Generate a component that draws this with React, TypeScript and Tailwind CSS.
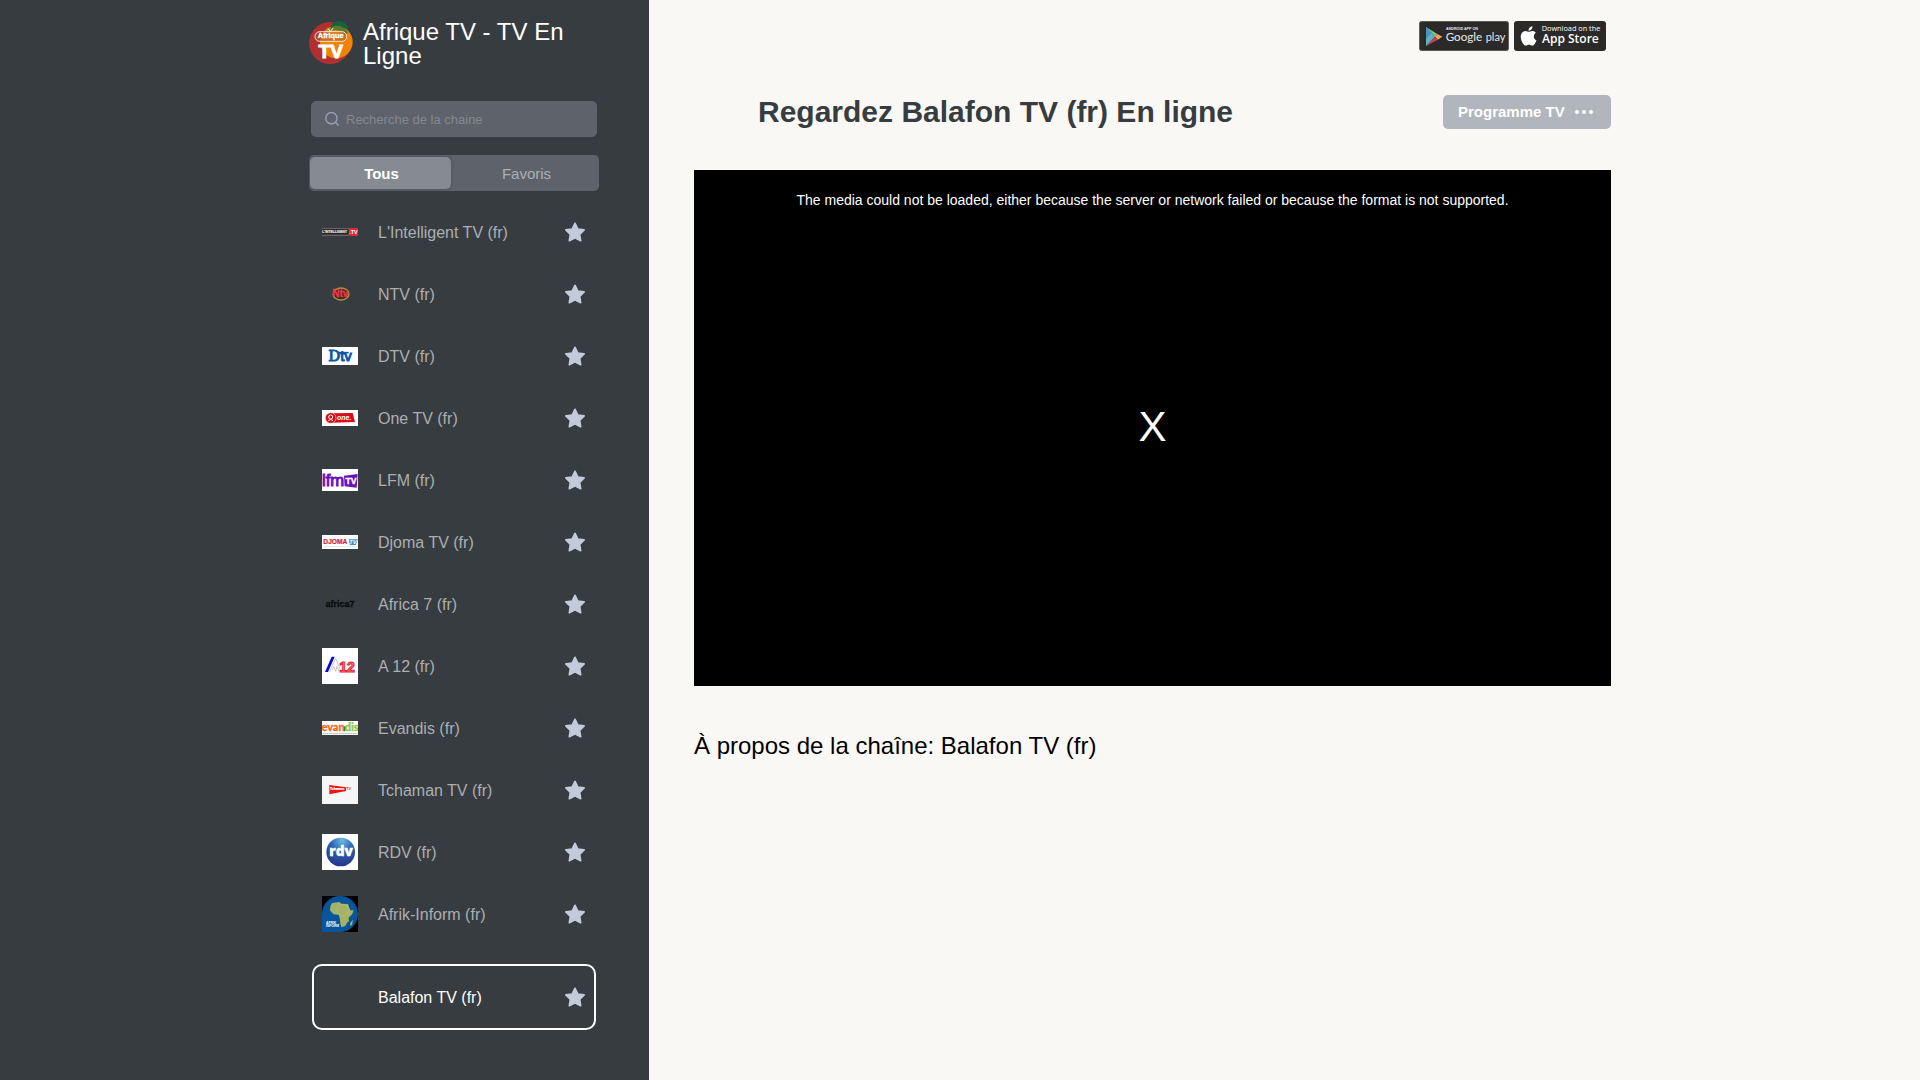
import type { ReactNode } from "react";

const SANS = "'Open Sans', sans-serif";
const ARIAL = "'Liberation Sans', Arial, sans-serif";

function AfriqueLogo() {
  return (
    <svg viewBox="1 0 132 132" className="h-11 w-11 shrink-0" role="img" aria-label="Afrique TV">
      <defs>
        <clipPath id="disc">
          <circle cx="64" cy="69" r="63" />
        </clipPath>
      </defs>
      <circle cx="64" cy="69" r="63" fill="#ae3130" />
      <circle cx="91" cy="31" r="28" fill="#176540" />
      <circle cx="83" cy="66" r="49" fill="#f0830a" />
      <g clipPath="url(#disc)">
        <path d="M64 26 A28 28 0 0 1 119 36 Q92 8 64 26 Z" fill="#176540" />
        <path d="M64 26 Q92 8 119 36 L112 46 Q88 22 63 34 Z" fill="#5f7a2c" />
      </g>
      <rect x="19" y="35" width="95" height="29" rx="14" fill="#a9552c" fillOpacity="0.5" stroke="#fff" strokeWidth="2.5" />
      <path d="M58 26 L65 34 L74 24" fill="none" stroke="#fff" strokeWidth="3" />
      <text x="66" y="55" textAnchor="middle" fontSize="22" fontWeight="700" fill="#fff" stroke="#fff" fontFamily={ARIAL}>Afrique</text>
      <text x="66" y="114" textAnchor="middle" fontSize="57" fontWeight="700" fill="#fff" stroke="#fff" strokeWidth="3" fontFamily={ARIAL}>TV</text>
    </svg>
  );
}

function LogoIntelligent() {
  return (
    <svg viewBox="0 0 108 24" className="w-9">
      <rect width="108" height="24" fill="#6b6664" />
      <rect y="3" width="80" height="17" fill="#2c2827" />
      <text x="1" y="16" fontSize="10" fontWeight="700" fill="#e6e2dd" stroke="#e6e2dd" strokeWidth="0.5" fontFamily={ARIAL}>L'INTELLIGENT</text>
      <rect x="81" width="27" height="24" fill="#e0283a" />
      <text x="82" y="18" fontSize="16" fontWeight="700" fill="#fff" fontFamily={ARIAL}>.TV</text>
    </svg>
  );
}

function LogoNtv() {
  return (
    <svg viewBox="0 0 108 42" className="w-9">
      <ellipse cx="57" cy="21" rx="24" ry="18" fill="#3a2d28" stroke="#b38f42" strokeWidth="4" />
      <text x="55" y="31" textAnchor="middle" fontSize="30" fontWeight="700" fill="#f03646" stroke="#f03646" strokeWidth="1" fontFamily={ARIAL}>Ntv</text>
    </svg>
  );
}

function LogoDtv() {
  return (
    <svg viewBox="0 0 108 54" className="w-9">
      <rect width="108" height="54" fill="#fff" />
      <text x="54" y="42" textAnchor="middle" fontSize="45" fontWeight="400" fill="#0c57a4" stroke="#0c57a4" strokeWidth="3" fontFamily={ARIAL}>
        <tspan fontFamily="'DejaVu Serif', serif">D</tspan>tv
      </text>
      <path d="M50 17 H80" stroke="#0c57a4" strokeWidth="5" />
    </svg>
  );
}

function LogoOne() {
  return (
    <svg viewBox="0 0 108 48" className="w-9">
      <rect width="108" height="48" fill="#fff" />
      <path d="M26 10 L92 9 L99 36 L28 38 Z" fill="#d80d19" />
      <circle cx="26" cy="24" r="16" fill="#d80d19" stroke="#fff" strokeWidth="1.5" />
      <circle cx="26" cy="21" r="6" fill="none" stroke="#fff" strokeWidth="3" />
      <path d="M19 32 Q26 24 33 32" fill="none" stroke="#fff" strokeWidth="3" />
      <text x="45" y="30" fontSize="21" fontWeight="700" fontStyle="italic" fill="#fff" fontFamily={ARIAL}>one.</text>
    </svg>
  );
}

function LogoLfm() {
  return (
    <svg viewBox="0 0 108 66" className="w-9">
      <rect width="108" height="66" fill="#fff" />
      <path d="M66 20 L107 15 L104 56 L68 52 Z" fill="#6c10b8" />
      <text x="0" y="51" fontSize="50" fill="#6c10b8" stroke="#6c10b8" strokeWidth="3" fontFamily={ARIAL}>lfm</text>
      <text x="87" y="45" textAnchor="middle" fontSize="26" fontWeight="700" fill="#fff" stroke="#fff" fontFamily={ARIAL}>TV</text>
    </svg>
  );
}

function LogoDjoma() {
  return (
    <svg viewBox="0 0 108 42" className="w-9">
      <rect width="108" height="42" fill="#fff" />
      <path d="M80 13 H108 L101 30 H84 Z" fill="#3a8fc6" />
      <text x="4" y="28" fontSize="20" fontWeight="700" fill="#d3202f" stroke="#d3202f" strokeWidth="0.5" fontFamily={ARIAL}>DJOMA</text>
      <text x="82" y="27" fontSize="17" fontWeight="700" fontStyle="italic" fill="#fff" fontFamily={ARIAL}>TV</text>
      <path d="M2 35 H106" stroke="#e3e8ed" strokeWidth="3" />
    </svg>
  );
}

function LogoAfrica() {
  return (
    <svg viewBox="0 0 108 36" className="w-9">
      <text x="54" y="27" textAnchor="middle" fontSize="27" fontWeight="700" fill="#0b0c0d" stroke="#0b0c0d" strokeWidth="1" fontFamily={ARIAL}>africa7</text>
    </svg>
  );
}

function LogoA12() {
  return (
    <svg viewBox="0 0 108 108" className="w-9">
      <rect width="108" height="108" fill="#fff" />
      <path d="M9 72 L29 26 H38 L18 72 Z" fill="#0909d4" />
      <path d="M23 72 L41 31 L58 72 M30 66 L36 56 L41 70 L45 56 L51 70" fill="none" stroke="#aaa" strokeWidth="2" />
      <text x="52" y="72" fontSize="42" fontWeight="700" fill="#ff8080" stroke="#e8202c" strokeWidth="3" fontFamily={ARIAL}>12</text>
    </svg>
  );
}

function LogoEvandis() {
  return (
    <svg viewBox="0 0 108 42" className="w-9">
      <rect width="108" height="42" fill="#fff" />
      <text x="54" y="31" textAnchor="middle" fontSize="33" fontWeight="700" fill="#f0631d" stroke="#f0631d" fontFamily="Lato, sans-serif">
        evan<tspan fill="#8bc63c" stroke="#8bc63c">dis</tspan>
      </text>
      <path d="M68 16 V31" stroke="#25825a" strokeWidth="4" />
      <path d="M1 38 H107" stroke="#b5b5b5" strokeWidth="3" strokeDasharray="5 1" />
    </svg>
  );
}

function LogoTchaman() {
  return (
    <svg viewBox="0 0 108 84" className="w-9">
      <rect width="108" height="84" fill="#f6f6f7" />
      <path d="M22 27 L72 34 V45 L22 55 Z" fill="#ee1219" />
      <text x="24" y="43" fontSize="10" fontWeight="700" fill="#fff" stroke="#fff" strokeWidth="0.5" fontFamily={ARIAL}>Tchaman</text>
      <text x="73" y="43" fontSize="11" fontWeight="700" fill="#ee1219" fontFamily={ARIAL}>TV</text>
    </svg>
  );
}

function LogoRdv() {
  return (
    <svg viewBox="0 0 108 108" className="w-9">
      <defs>
        <radialGradient id="globe" cx="0.55" cy="0.1" r="0.9">
          <stop offset="0" stopColor="#6db8e6" />
          <stop offset="0.45" stopColor="#2a62ad" />
          <stop offset="1" stopColor="#27348b" />
        </radialGradient>
      </defs>
      <rect width="108" height="108" fill="#fff" />
      <circle cx="56" cy="54" r="43" fill="url(#globe)" />
      <text x="57" y="67" textAnchor="middle" fontSize="41" fontWeight="800" fill="#fff" stroke="#fff" fontFamily={SANS}>rdv</text>
    </svg>
  );
}

function LogoAfrikInform() {
  return (
    <svg viewBox="0 0 108 108" className="w-9">
      <rect width="108" height="108" fill="#000" />
      <path d="M0 108 V54 A54 54 0 1 1 54 108 Z" fill="#08559a" />
      <path d="M30 21 L52 18 L58 23 L78 24 L85 43 L95 43 L91 54 L80 65 L81 75 L75 80 L70 90 L58 94 L55 82 L53 65 L50 56 L34 55 L24 43 L25 31 Z" fill="#a3b368" />
      <circle cx="62" cy="42" r="17" fill="none" stroke="#b4bd70" strokeWidth="3" />
      <path d="M85 80 L93 71 L90 87 L84 89 Z" fill="#a3b368" />
      <text x="12" y="83" fontSize="10" fontWeight="700" fill="#fff" fontFamily={ARIAL}>AFRIK</text>
      <text x="12" y="94" fontSize="10" fontWeight="700" fill="#fff" fontFamily={ARIAL}>INFORM</text>
    </svg>
  );
}

const channels: { name: string; logo: ReactNode }[] = [
  { name: "L'Intelligent TV (fr)", logo: <LogoIntelligent /> },
  { name: "NTV (fr)", logo: <LogoNtv /> },
  { name: "DTV (fr)", logo: <LogoDtv /> },
  { name: "One TV (fr)", logo: <LogoOne /> },
  { name: "LFM (fr)", logo: <LogoLfm /> },
  { name: "Djoma TV (fr)", logo: <LogoDjoma /> },
  { name: "Africa 7 (fr)", logo: <LogoAfrica /> },
  { name: "A 12 (fr)", logo: <LogoA12 /> },
  { name: "Evandis (fr)", logo: <LogoEvandis /> },
  { name: "Tchaman TV (fr)", logo: <LogoTchaman /> },
  { name: "RDV (fr)", logo: <LogoRdv /> },
  { name: "Afrik-Inform (fr)", logo: <LogoAfrikInform /> },
];

function FavoriteButton({ name }: { name: string }) {
  return (
    <button type="button" aria-label={`Ajouter ${name} aux favoris`} className="shrink-0">
      <svg viewBox="1 0.5 22 22" className="h-5 w-5" fill="#c3cad9" stroke="#c3cad9" strokeWidth="2" strokeLinejoin="round">
        <path d="M12 2l3.09 6.26L22 9.27l-5 4.87 1.18 6.88L12 17.77l-6.18 3.25L7 14.14 2 9.27l6.91-1.01L12 2z" />
      </svg>
    </button>
  );
}

function GooglePlayBadge() {
  return (
    <a href="#google-play" aria-label="Android app on Google Play">
      <svg viewBox="0 0 270 90" className="h-[30px] w-[90px]">
        <rect x="1" y="1" width="268" height="88" rx="8" fill="#2b2a29" stroke="#55544f" strokeWidth="2" />
        <path d="M21 18 V76 L48 47 Z" fill="#5fb3bd" />
        <path d="M21 18 L48 47 L55 39 Z" fill="#7fbf8e" />
        <path d="M21 18 L38 36 L21 54 Z" fill="#4894c0" />
        <path d="M55 39 L70 47 L56 56 L48 47 Z" fill="#f0a45c" />
        <path d="M48 47 L56 56 L21 76 Z" fill="#c04258" />
        <text x="81" y="26" fontSize="11" fontWeight="700" fill="#e8e8e8" fontFamily={ARIAL}>ANDROID APP ON</text>
        <text x="80" y="59" fontSize="35" fill="#e8e8e8" fontFamily="Lato, sans-serif">Google</text>
        <text x="200" y="59" fontSize="33" fill="#e8e8e8" fontFamily="Lato, sans-serif">play</text>
      </svg>
    </a>
  );
}

function AppStoreBadge() {
  return (
    <a href="#app-store" aria-label="Download on the App Store">
      <svg viewBox="0 0 276 90" className="h-[30px] w-[92px]">
        <rect width="276" height="90" rx="9" fill="#2b2a29" />
        <g transform="translate(9 10) scale(2.9)" fill="#fff">
          <path d="M18.71 19.5c-.83 1.24-1.71 2.45-3.05 2.47-1.34.03-1.77-.79-3.29-.79-1.53 0-2 .77-3.27.82-1.31.05-2.3-1.32-3.14-2.53C4.25 17 2.94 12.45 4.7 9.39c.87-1.52 2.43-2.48 4.12-2.51 1.28-.02 2.5.87 3.29.87.78 0 2.26-1.07 3.81-.91.65.03 2.47.26 3.64 1.98-.09.06-2.17 1.28-2.15 3.81.03 3.02 2.65 4.03 2.68 4.04-.03.07-.42 1.44-1.38 2.83M13 3.5c.73-.83 1.94-1.46 2.94-1.5.13 1.17-.34 2.35-1.04 3.19-.69.85-1.83 1.51-2.95 1.42-.15-1.15.41-2.35 1.05-3.11z" />
        </g>
        <text x="83" y="29" fontSize="22" fill="#fff" fontFamily={SANS}>Download on the</text>
        <text x="84" y="65" fontSize="36" fontWeight="600" fill="#fff" fontFamily={SANS}>App Store</text>
      </svg>
    </a>
  );
}

function Sidebar() {
  return (
    <aside className="flex w-[calc(50%-311px)] shrink-0 justify-end bg-[#373c40] pr-[50px]">
      <div className="w-[290px] pt-5 pb-[50px]">
        <a href="#accueil" className="flex gap-[10px] pr-5">
          <AfriqueLogo />
          <span className="text-2xl leading-6 text-white">Afrique TV - TV En Ligne</span>
        </a>

        <label className="mx-[2px] mt-[33px] flex h-9 items-center gap-[7px] rounded-[5px] bg-[#5e636b] px-[14px]">
          <svg viewBox="0 0 14 14" className="h-[14px] w-[14px] shrink-0" fill="none" stroke="#979db5" strokeWidth="1.4">
            <circle cx="6.4" cy="6.2" r="5.6" />
            <path d="M10.4 10.2 L13.6 13.4" />
          </svg>
          <input
            type="text"
            aria-label="Recherche de la chaine"
            placeholder="Recherche de la chaine"
            className="min-w-0 flex-1 bg-transparent pt-px text-[13px] text-white outline-none placeholder:text-[#83878f]"
          />
        </label>

        <div className="mt-[18px] flex h-9 rounded-[5px] bg-[#5e636b] px-px py-[2px] text-[15px]">
          <button type="button" className="w-[141px] rounded-[5px] bg-[#868b92] pt-0.5 pl-0.5 font-bold text-white shadow-[0_0_3px_rgba(0,0,0,0.3)]">
            Tous
          </button>
          <button type="button" className="flex-1 pt-0.5 pl-1 text-[#abafb6]">Favoris</button>
        </div>

        <ul className="mt-[10px]">
          {channels.map(({ name, logo }) => (
            <li key={name} className="flex h-[62px] items-center pr-[14px] pl-[13px]">
              <a href="#chaine" className="flex flex-1 items-center gap-5 text-base text-[#abafb2]">
                <span className="flex w-9 shrink-0 items-center">{logo}</span>
                <span className="pt-0.5">{name}</span>
              </a>
              <FavoriteButton name={name} />
            </li>
          ))}
          <li className="mx-[3px] mt-[19px] flex h-[66px] items-center rounded-[10px] border-2 border-white pr-[9px] pl-2">
            <a href="#chaine" aria-current="page" className="flex flex-1 items-center gap-5 text-base text-white">
              <span className="w-9 shrink-0" />
              <span className="pt-0.5">Balafon TV (fr)</span>
            </a>
            <FavoriteButton name="Balafon TV (fr)" />
          </li>
        </ul>
      </div>
    </aside>
  );
}

export default function App() {
  return (
    <div className="flex min-h-screen bg-[#faf8f5] font-['Liberation_Sans',Arial,sans-serif]">
      <Sidebar />
      <main className="min-w-0 flex-1 pl-[45px]">
        <div className="max-w-[917px]">
          <div className="flex justify-end gap-[5px] pt-[21px] pr-[5px]">
            <GooglePlayBadge />
            <AppStoreBadge />
          </div>

          <div className="mt-[42px] flex items-center justify-between pl-16">
            <h1 className="text-3xl leading-[38px] font-bold text-[#373c40]">Regardez Balafon TV (fr) En ligne</h1>
            <button
              type="button"
              className="flex h-[34px] w-[168px] items-center justify-between rounded-[5px] bg-[#b1b5bc] pr-[17px] pl-[15px] text-[15px] font-bold text-white"
            >
              Programme TV
              <svg viewBox="0 0 20 4" className="h-1 w-5" fill="#fff">
                <circle cx="3" cy="2" r="2" />
                <circle cx="10" cy="2" r="2" />
                <circle cx="17" cy="2" r="2" />
              </svg>
            </button>
          </div>

          <section aria-label="Lecteur vidéo" className="mt-[39px] flex aspect-video flex-col bg-black p-5 text-center text-white">
            <p className="text-sm leading-5">
              The media could not be loaded, either because the server or network failed or because the format is not supported.
            </p>
            <div className="flex flex-1 items-center justify-center pb-[22px] text-[42px] leading-none">X</div>
          </section>

          <h2 className="mt-11 text-2xl leading-8 text-black">À propos de la chaîne: Balafon TV (fr)</h2>
        </div>
      </main>
    </div>
  );
}
